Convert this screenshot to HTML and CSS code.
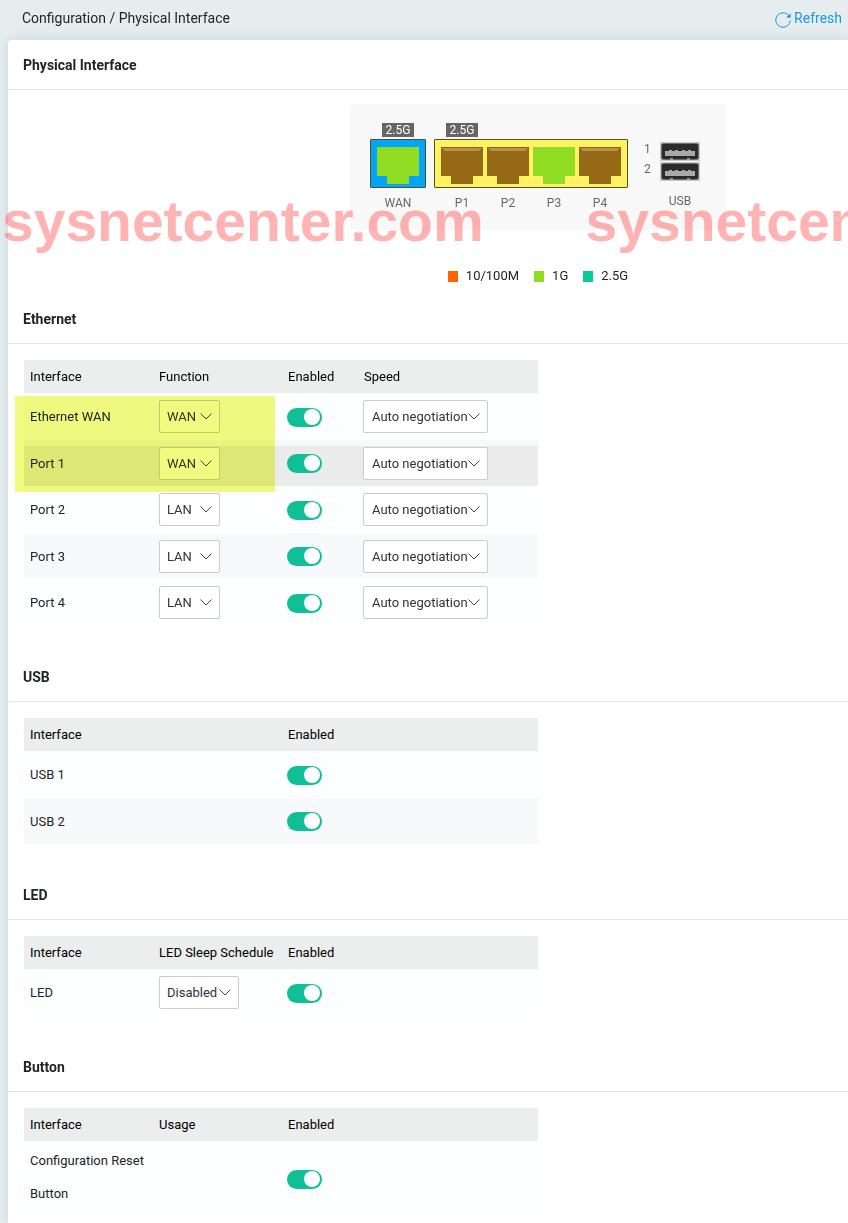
FILE: index.html
```html
<!DOCTYPE html>
<html lang="en">
<head>
  <meta charset="UTF-8">
  <meta name="viewport" content="width=device-width, initial-scale=1.0">
  <title>Configuration / Physical Interface</title>
  <link rel="stylesheet" href="styles.css">
</head>
<body>
  <svg class="symbols" aria-hidden="true">
    <symbol id="jack" viewBox="0 0 42 37">
      <path d="M0 0H42V29H32V37H10V29H0Z" fill="currentColor"/>
    </symbol>
    <symbol id="jack-empty" viewBox="0 0 42 37">
      <path d="M0 0H42V29H32V37H10V29H0Z" fill="#956915"/>
      <path d="M0 0H42L38 4H4Z" fill="#b8914a"/>
      <path d="M0 0H42V1H0Z" fill="#8a6318"/>
    </symbol>
    <symbol id="usb-port" viewBox="0 0 40 19">
      <rect width="40" height="19" fill="#c9c9c9"/>
      <rect x="1.5" y="1.5" width="37" height="16" rx="2" fill="#2b2b2b" stroke="#6f6f6f"/>
      <path d="M5 9h4V8h3v1h3V8h3v1h4V8h3v1h3V8h3v1h4v5H5Z" fill="#a9a9a9"/>
      <path d="M10 16h3v2h-3zM27 16h3v2h-3z" fill="#999"/>
    </symbol>
  </svg>

  <header class="topbar">
    <div class="breadcrumb">Configuration / Physical Interface</div>
    <a class="refresh" href="#">
      <svg width="16" height="16" viewBox="0 0 16 16" fill="none" stroke="currentColor" aria-hidden="true">
        <path d="M15.3 8.5A7.3 7.3 0 1 1 13.6 3.3"/>
        <path d="M15.6 1.5V6L11.2 5.2Z" fill="currentColor" stroke="none"/>
      </svg>
      Refresh
    </a>
  </header>

  <main class="card">
    <h2>Physical Interface</h2>
    <div class="device">
      <div class="panel">
        <div class="port-group">
          <div class="badges"><span class="badge">2.5G</span></div>
          <div class="ports wan">
            <svg class="up"><use href="#jack"/></svg>
          </div>
          <div class="labels"><span>WAN</span></div>
        </div>
        <div class="port-group">
          <div class="badges"><span class="badge">2.5G</span></div>
          <div class="ports lan">
            <svg><use href="#jack-empty"/></svg>
            <svg><use href="#jack-empty"/></svg>
            <svg class="up"><use href="#jack"/></svg>
            <svg><use href="#jack-empty"/></svg>
          </div>
          <div class="labels"><span>P1</span><span>P2</span><span>P3</span><span>P4</span></div>
        </div>
        <div class="usb-group">
          <span>1</span><svg><use href="#usb-port"/></svg>
          <span>2</span><svg><use href="#usb-port"/></svg>
          <span class="usb-label">USB</span>
        </div>
      </div>
      <ul class="legend">
        <li class="speed-100m">10/100M</li>
        <li class="speed-1g">1G</li>
        <li class="speed-25g">2.5G</li>
      </ul>
    </div>

    <h2>Ethernet</h2>
    <div class="section">
      <div class="highlight"></div>
      <table>
        <thead>
          <tr><th class="col-name">Interface</th><th class="col-func">Function</th><th class="col-on">Enabled</th><th>Speed</th></tr>
        </thead>
        <tbody>
          <tr>
            <td>Ethernet WAN</td>
            <td><select class="func" aria-label="Ethernet WAN function"><option>WAN</option><option>LAN</option></select></td>
            <td><input type="checkbox" class="switch" aria-label="Ethernet WAN enabled" checked></td>
            <td><select class="speed" aria-label="Ethernet WAN speed"><option>Auto negotiation</option></select></td>
          </tr>
          <tr class="active">
            <td>Port 1</td>
            <td><select class="func" aria-label="Port 1 function"><option>WAN</option><option>LAN</option></select></td>
            <td><input type="checkbox" class="switch" aria-label="Port 1 enabled" checked></td>
            <td><select class="speed" aria-label="Port 1 speed"><option>Auto negotiation</option></select></td>
          </tr>
          <tr>
            <td>Port 2</td>
            <td><select class="func" aria-label="Port 2 function"><option>LAN</option><option>WAN</option></select></td>
            <td><input type="checkbox" class="switch" aria-label="Port 2 enabled" checked></td>
            <td><select class="speed" aria-label="Port 2 speed"><option>Auto negotiation</option></select></td>
          </tr>
          <tr>
            <td>Port 3</td>
            <td><select class="func" aria-label="Port 3 function"><option>LAN</option><option>WAN</option></select></td>
            <td><input type="checkbox" class="switch" aria-label="Port 3 enabled" checked></td>
            <td><select class="speed" aria-label="Port 3 speed"><option>Auto negotiation</option></select></td>
          </tr>
          <tr>
            <td>Port 4</td>
            <td><select class="func" aria-label="Port 4 function"><option>LAN</option><option>WAN</option></select></td>
            <td><input type="checkbox" class="switch" aria-label="Port 4 enabled" checked></td>
            <td><select class="speed" aria-label="Port 4 speed"><option>Auto negotiation</option></select></td>
          </tr>
        </tbody>
      </table>
    </div>

    <h2>USB</h2>
    <div class="section">
      <table>
        <thead>
          <tr><th class="col-name">Interface</th><th class="col-func"></th><th class="col-on">Enabled</th><th></th></tr>
        </thead>
        <tbody>
          <tr>
            <td>USB 1</td>
            <td></td>
            <td><input type="checkbox" class="switch" aria-label="USB 1 enabled" checked></td>
            <td></td>
          </tr>
          <tr>
            <td>USB 2</td>
            <td></td>
            <td><input type="checkbox" class="switch" aria-label="USB 2 enabled" checked></td>
            <td></td>
          </tr>
        </tbody>
      </table>
    </div>

    <h2>LED</h2>
    <div class="section">
      <table>
        <thead>
          <tr><th class="col-name">Interface</th><th class="col-func">LED Sleep Schedule</th><th class="col-on">Enabled</th><th></th></tr>
        </thead>
        <tbody>
          <tr>
            <td>LED</td>
            <td><select class="schedule" aria-label="LED sleep schedule"><option>Disabled</option><option>Enabled</option></select></td>
            <td><input type="checkbox" class="switch" aria-label="LED enabled" checked></td>
            <td></td>
          </tr>
        </tbody>
      </table>
    </div>

    <h2>Button</h2>
    <div class="section">
      <table>
        <thead>
          <tr><th class="col-name">Interface</th><th class="col-func">Usage</th><th class="col-on">Enabled</th><th></th></tr>
        </thead>
        <tbody>
          <tr class="tall">
            <td>Configuration Reset Button</td>
            <td></td>
            <td><input type="checkbox" class="switch" aria-label="Configuration reset button enabled" checked></td>
            <td></td>
          </tr>
        </tbody>
      </table>
    </div>
  </main>

  <div class="watermark">
    <span>sysnetcenter.com</span>
    <span>sysnetcenter.com</span>
  </div>
</body>
</html>
```

FILE: styles.css
```css
* {
  box-sizing: border-box;
  margin: 0;
  padding: 0;
}

body {
  position: relative;
  display: flex;
  flex-direction: column;
  min-height: 100vh;
  overflow-x: hidden;
  background-color: #e7edef;
  color: #212529;
  font-family: Roboto, Arial, sans-serif;
  font-size: 13px;
}

.symbols {
  display: none;
}

.topbar {
  display: flex;
  justify-content: space-between;
  height: 40px;
  padding: 8px 6px 0 22px;
  font-size: 14px;
  line-height: 20px;
}

.refresh {
  display: flex;
  gap: 3px;
  color: #189be0;
  text-decoration: none;
}

.refresh svg {
  margin-top: 4px;
}

.card {
  flex: 1;
  margin-left: 8px;
  background-color: #fff;
  border-top-left-radius: 4px;
  box-shadow: 0 0 12px rgba(140, 180, 200, 0.4);
}

h2 {
  height: 50px;
  padding-left: 15px;
  border-bottom: 1px solid #e3e6e8;
  font-size: 14px;
  font-weight: 700;
  line-height: 50px;
}

/* Device front panel */
.device {
  display: flex;
  flex-direction: column;
  align-items: center;
  width: fit-content;
  margin-left: 342px;
  padding: 14px 0 8px;
}

.panel {
  display: flex;
  gap: 8px;
  height: 126px;
  padding: 19px 26px 0 20px;
  border-radius: 4px;
  background-color: #f8f8f8;
  color: #666;
  font-size: 12px;
}

.badges,
.ports,
.labels {
  display: flex;
  gap: 4px;
}

.badges {
  height: 16px;
  padding: 0 7px;
}

.badge {
  width: 32px;
  height: 14px;
  margin-left: 5px;
  background-color: #666;
  color: #fff;
  line-height: 14px;
  text-align: center;
}

.ports {
  padding: 7px 6px 3px;
  border: 1px solid #55501f;
  border-radius: 1px;
}

.ports svg {
  width: 42px;
  height: 37px;
}

.ports .up {
  color: #90dc22;
}

.wan {
  background-color: #03a4fb;
}

.lan {
  background-color: #fff363;
}

.labels {
  padding: 7px 7px 0;
  line-height: 16px;
}

.labels span {
  width: 42px;
  text-align: center;
}

.usb-group {
  display: grid;
  grid-template-columns: 8px 40px;
  grid-template-rows: 19px 19px;
  column-gap: 8px;
  row-gap: 1px;
  margin-left: 8px;
  padding-top: 19px;
}

.usb-group > span {
  line-height: 14px;
}

.usb-group svg {
  width: 40px;
  height: 19px;
}

.usb-group .usb-label {
  grid-column: 2;
  margin-top: 12px;
  text-align: center;
}

.legend {
  display: flex;
  gap: 15px;
  margin-top: 36px;
  list-style: none;
  line-height: 20px;
}

.legend li {
  display: flex;
  align-items: center;
  gap: 8px;
}

.legend li::before {
  content: "";
  width: 10px;
  height: 11px;
}

.legend .speed-100m::before {
  background-color: #fc6500;
}

.legend .speed-1g::before {
  background-color: #90dc22;
}

.legend .speed-25g::before {
  background-color: #05cb9d;
}

/* Interface tables */
.section {
  position: relative;
  padding: 16px 16px 26px;
}

.section:last-child {
  padding-bottom: 0;
}

table {
  width: 514px;
  max-width: 100%;
  border-collapse: collapse;
  table-layout: fixed;
}

thead tr {
  height: 33px;
  background-color: #eceded;
  color: #000;
}

th {
  padding-left: 6px;
  font-weight: 400;
  text-align: left;
  white-space: nowrap;
}

.col-name,
.col-func {
  width: 129px;
}

.col-on {
  width: 76px;
}

tbody tr {
  height: 47px;
  background-color: #fdfefe;
}

tbody tr:nth-child(even) {
  height: 46px;
  background-color: #f8f9fa;
}

tbody .active {
  background-image: linear-gradient(#f6f8fa 6px, #ebebeb 6px);
}

tbody .tall {
  height: 75px;
}

td {
  padding-left: 6px;
  line-height: 33px;
  vertical-align: middle;
}

td:nth-child(3),
td:nth-child(4) {
  padding-left: 5px;
}

.tall td:first-child {
  padding-bottom: 4px;
}

select {
  display: block;
  height: 33px;
  padding-left: 7px;
  appearance: none;
  border: 1px solid #ccc;
  border-radius: 2px;
  background: #fff url("data:image/svg+xml,%3Csvg xmlns='http://www.w3.org/2000/svg' width='12' height='7' fill='none' stroke='%23444'%3E%3Cpath d='M.5 .5L6 6L11.5 .5'/%3E%3C/svg%3E") no-repeat right 7px center;
  color: #333;
  font-family: inherit;
  font-size: 13px;
}

.func {
  width: 61px;
}

.speed {
  width: 125px;
  padding-left: 8px;
}

.schedule {
  width: 80px;
}

.switch {
  display: block;
  width: 35px;
  height: 19px;
  margin-top: 1px;
  appearance: none;
  border-radius: 10px;
  background-color: #b5bcc0;
}

.switch::before {
  content: "";
  display: block;
  width: 16px;
  height: 16px;
  margin: 1px 0 0 2px;
  border-radius: 50%;
  background-color: #fff;
}

.switch:checked {
  background-color: #10bf98;
}

.switch:checked::before {
  margin-left: 17px;
}

.highlight {
  position: absolute;
  top: 52px;
  left: 7px;
  width: 260px;
  height: 96px;
  background-color: #f0fb7f;
  mix-blend-mode: multiply;
  pointer-events: none;
}

.watermark {
  position: absolute;
  top: 188px;
  left: 0;
  right: 0;
  display: flex;
  gap: 102px;
  padding-left: 2px;
  overflow: hidden;
  color: rgba(255, 90, 90, 0.46);
  font-family: "Liberation Sans", Arial, sans-serif;
  font-size: 57px;
  font-weight: 700;
  line-height: 66px;
  pointer-events: none;
}
```
